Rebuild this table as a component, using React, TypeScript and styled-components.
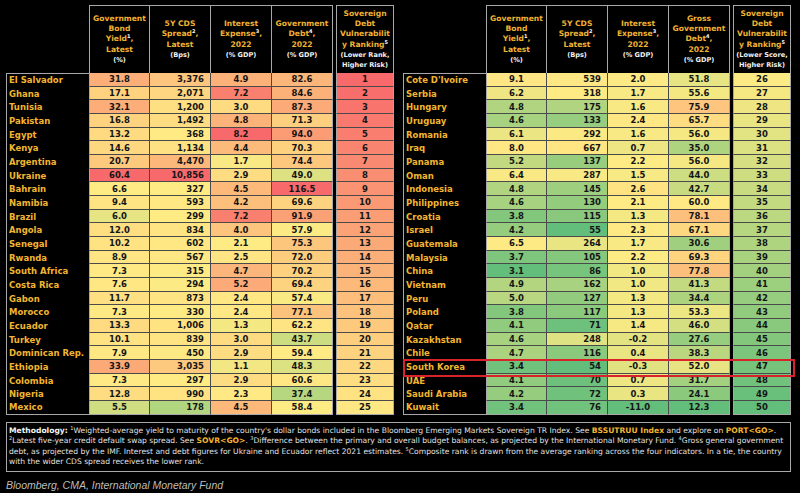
import React from 'react'
import styled, { createGlobalStyle } from 'styled-components'

type Row = [string, number, number, number, number, number]

const leftRows: Row[] = [
  ['El Salvador', 31.8, 3376, 4.9, 82.6, 1],
  ['Ghana', 17.1, 2071, 7.2, 84.6, 2],
  ['Tunisia', 32.1, 1200, 3.0, 87.3, 3],
  ['Pakistan', 16.8, 1492, 4.8, 71.3, 4],
  ['Egypt', 13.2, 368, 8.2, 94.0, 5],
  ['Kenya', 14.6, 1134, 4.4, 70.3, 6],
  ['Argentina', 20.7, 4470, 1.7, 74.4, 7],
  ['Ukraine', 60.4, 10856, 2.9, 49.0, 8],
  ['Bahrain', 6.6, 327, 4.5, 116.5, 9],
  ['Namibia', 9.4, 593, 4.2, 69.6, 10],
  ['Brazil', 6.0, 299, 7.2, 91.9, 11],
  ['Angola', 12.0, 834, 4.0, 57.9, 12],
  ['Senegal', 10.2, 602, 2.1, 75.3, 13],
  ['Rwanda', 8.9, 567, 2.5, 72.0, 14],
  ['South Africa', 7.3, 315, 4.7, 70.2, 15],
  ['Costa Rica', 7.6, 294, 5.2, 69.4, 16],
  ['Gabon', 11.7, 873, 2.4, 57.4, 17],
  ['Morocco', 7.3, 330, 2.4, 77.1, 18],
  ['Ecuador', 13.3, 1006, 1.3, 62.2, 19],
  ['Turkey', 10.1, 839, 3.0, 43.7, 20],
  ['Dominican Rep.', 7.9, 450, 2.9, 59.4, 21],
  ['Ethiopia', 33.9, 3035, 1.1, 48.3, 22],
  ['Colombia', 7.3, 297, 2.9, 60.6, 23],
  ['Nigeria', 12.8, 990, 2.3, 37.4, 24],
  ['Mexico', 5.5, 178, 4.5, 58.4, 25],
]

const rightRows: Row[] = [
  ["Cote D'Ivoire", 9.1, 539, 2.0, 51.8, 26],
  ['Serbia', 6.2, 318, 1.7, 55.6, 27],
  ['Hungary', 4.8, 175, 1.6, 75.9, 28],
  ['Uruguay', 4.6, 133, 2.4, 65.7, 29],
  ['Romania', 6.1, 292, 1.6, 56.0, 30],
  ['Iraq', 8.0, 667, 0.7, 35.0, 31],
  ['Panama', 5.2, 137, 2.2, 56.0, 32],
  ['Oman', 6.4, 287, 1.5, 44.0, 33],
  ['Indonesia', 4.8, 145, 2.6, 42.7, 34],
  ['Philippines', 4.6, 130, 2.1, 60.0, 35],
  ['Croatia', 3.8, 115, 1.3, 78.1, 36],
  ['Israel', 4.2, 55, 2.3, 67.1, 37],
  ['Guatemala', 6.5, 264, 1.7, 30.6, 38],
  ['Malaysia', 3.7, 105, 2.2, 69.3, 39],
  ['China', 3.1, 86, 1.0, 77.8, 40],
  ['Vietnam', 4.9, 162, 1.0, 41.3, 41],
  ['Peru', 5.0, 127, 1.3, 34.4, 42],
  ['Poland', 3.8, 117, 1.3, 53.3, 43],
  ['Qatar', 4.1, 71, 1.4, 46.0, 44],
  ['Kazakhstan', 4.6, 248, -0.2, 27.6, 45],
  ['Chile', 4.7, 116, 0.4, 38.3, 46],
  ['South Korea', 3.4, 54, -0.3, 52.0, 47],
  ['UAE', 4.1, 70, 0.7, 31.7, 48],
  ['Saudi Arabia', 4.2, 72, 0.3, 24.1, 49],
  ['Kuwait', 3.4, 76, -11.0, 12.3, 50],
]

// Excel-style three colour scale: min / 50th percentile / max
const RED = [248, 105, 107]
const YELLOW = [255, 235, 132]
const GREEN = [99, 190, 123]

const mix = (a: number[], b: number[], t: number) =>
  `rgb(${a.map((v, i) => Math.round(v + (b[i] - v) * t)).join(',')})`

const allRows = [...leftRows, ...rightRows]
const stats = [1, 2, 3, 4, 5].map((c) => {
  const vals = allRows.map((r) => r[c] as number).sort((a, b) => a - b)
  const n = vals.length
  return { min: vals[0], mid: (vals[n / 2 - 1] + vals[n / 2]) / 2, max: vals[n - 1] }
})

const heat = (col: number, v: number) => {
  const { min, mid, max } = stats[col - 1]
  const low = col === 5 ? RED : GREEN
  const high = col === 5 ? GREEN : RED
  if (v <= mid) return mix(low, YELLOW, (v - min) / (mid - min))
  return mix(YELLOW, high, (v - mid) / (max - mid))
}

const fmt = (col: number, v: number) => {
  if (col === 2) return v.toLocaleString('en-US')
  if (col === 5) return String(v)
  return v.toFixed(1)
}

const GlobalStyle = createGlobalStyle`
  body {
    margin: 0;
    background: #000;
  }
`

const Page = styled.div`
  width: 800px;
  height: 493px;
  background: #000;
  padding: 5px 6px 0;
  box-sizing: border-box;
  font-family: "DejaVu Sans", Verdana, sans-serif;
`

const Tables = styled.div`
  display: flex;
  gap: 9px;
`

const Table = styled.div`
  position: relative;
  display: grid;
  grid-template-columns: 83px repeat(4, 61px) 3px 58px;
  grid-template-rows: 68px repeat(25, 13.68px);
`

const Blank = styled.div`
  background: #000;
`

const HeadCell = styled.div<{ $first?: boolean; $rank?: boolean }>`
  display: flex;
  flex-direction: column;
  align-items: center;
  justify-content: center;
  text-align: center;
  background: #000;
  color: #f0b232;
  font-weight: bold;
  font-size: 7.6px;
  line-height: 10.3px;
  border-top: 1px solid #a8a8a8;
  border-right: 1px solid #a8a8a8;
  border-left: ${(p) => (p.$first || p.$rank ? '1px solid #a8a8a8' : 'none')};
  box-sizing: border-box;
  white-space: nowrap;

  sup {
    color: #fff;
    font-size: 5px;
    vertical-align: 3px;
    line-height: 0;
  }
`

const Unit = styled.span`
  color: #f2f2f2;
  font-size: 6.6px;
`

const Country = styled.div<{ $top?: boolean; $bottom?: boolean }>`
  display: flex;
  align-items: center;
  padding-left: 2px;
  background: #000;
  color: #f2b530;
  font-weight: bold;
  font-size: 8.5px;
  white-space: nowrap;
  border-left: 1px solid #a8a8a8;
  border-top: ${(p) => (p.$top ? '1px solid #a8a8a8' : 'none')};
  border-bottom: ${(p) => (p.$bottom ? '1px solid #a8a8a8' : 'none')};
  box-sizing: border-box;
`

const Cell = styled.div<{ $bg: string; $right?: boolean; $edge?: boolean; $first?: boolean; $last?: boolean }>`
  display: flex;
  align-items: center;
  justify-content: ${(p) => (p.$right ? 'flex-end' : 'center')};
  padding-right: ${(p) => (p.$right ? '6px' : '0')};
  background: ${(p) => p.$bg};
  color: #151515;
  font-weight: bold;
  font-size: 8.5px;
  border-right: 1px solid ${(p) => (p.$edge ? '#a8a8a8' : '#4a4a4a')};
  border-bottom: 1px solid ${(p) => (p.$last ? '#a8a8a8' : '#4a4a4a')};
  border-left: ${(p) => (p.$first ? '1px solid #a8a8a8' : 'none')};
  box-sizing: border-box;
`

const Spacer = styled.div`
  background: #000;
`

// red box drawn over one row; the grid area of that row is its containing block
const Highlight = styled.div`
  position: absolute;
  grid-column: 1 / -1;
  top: -1px;
  bottom: -3px;
  left: 0;
  right: -4px;
  border: 2px solid #d9232b;
  pointer-events: none;
`

const Notes = styled.div`
  margin-top: 7px;
  margin-right: 3px;
  border: 1px solid #a8a8a8;
  padding: 3px 2px 4px;
  color: #e0e0e0;
  font-size: 7.6px;
  line-height: 10.4px;
  white-space: nowrap;

  sup {
    font-size: 5px;
    vertical-align: 3px;
    line-height: 0;
  }
`

const Line = styled.div``

const Bold = styled.b`
  color: #f4f4f4;
`

const Code = styled.b`
  color: #f2b530;
`

const Source = styled.div`
  margin-top: 7px;
  font-family: "Liberation Sans", Arial, sans-serif;
  font-style: italic;
  font-size: 10.5px;
  color: #bdbdbd;
`

type Head = { lines: React.ReactNode[]; units: string[] }

const heads = (gross: boolean, rankNote: string): Head[] => [
  { lines: ['Government', 'Bond', <>Yield<sup>1</sup>,</>, 'Latest'], units: ['(%)'] },
  { lines: ['5Y CDS', <>Spread<sup>2</sup>,</>, 'Latest'], units: ['(Bps)'] },
  { lines: ['Interest', <>Expense<sup>3</sup>,</>, '2022'], units: ['(% GDP)'] },
  {
    lines: gross
      ? ['Gross', 'Government', <>Debt<sup>4</sup>,</>, '2022']
      : ['Government', <>Debt<sup>4</sup>,</>, '2022'],
    units: ['(% GDP)'],
  },
  {
    lines: ['Sovereign', 'Debt', 'Vulnerabilit', <>y Ranking<sup>5</sup></>],
    units: [rankNote, 'Higher Risk)'],
  },
]

const DebtTable = ({ rows, gross, rankNote, highlight }: { rows: Row[]; gross: boolean; rankNote: string; highlight?: number }) => {
  const h = heads(gross, rankNote)
  return (
    <Table>
      <Blank />
      {h.map((head, i) => (
        <React.Fragment key={i}>
          {i === 4 && <Spacer />}
          <HeadCell $first={i === 0} $rank={i === 4}>
            {head.lines.map((l, j) => (
              <span key={j}>{l}</span>
            ))}
            {head.units.map((u) => (
              <Unit key={u}>{u}</Unit>
            ))}
          </HeadCell>
        </React.Fragment>
      ))}
      {rows.map((r, ri) => (
        <React.Fragment key={r[0]}>
          <Country $top={ri === 0} $bottom={ri === rows.length - 1}>
            {r[0]}
          </Country>
          {[1, 2, 3, 4, 5].map((c) => (
            <React.Fragment key={c}>
              {c === 5 && <Spacer />}
              <Cell
                $bg={heat(c, r[c] as number)}
                $right={c === 2}
                $first={c === 1 || c === 5}
                $edge={c === 4 || c === 5}
                $last={ri === rows.length - 1}
              >
                {fmt(c, r[c] as number)}
              </Cell>
            </React.Fragment>
          ))}
        </React.Fragment>
      ))}
      {highlight !== undefined && <Highlight style={{ gridRow: `${highlight + 2} / ${highlight + 3}` }} />}
    </Table>
  )
}

export default function App() {
  return (
    <>
      <GlobalStyle />
      <Page>
        <Tables>
          <DebtTable rows={leftRows} gross={false} rankNote="(Lower Rank," />
          <DebtTable rows={rightRows} gross rankNote="(Lower Score," highlight={21} />
        </Tables>
        <Notes>
          <Line>
            <Bold>Methodology:</Bold> <sup>1</sup>Weighted-average yield to maturity of the country's dollar bonds included in the
            Bloomberg Emerging Markets Sovereign TR Index. See <Code>BSSUTRUU Index</Code> and explore on <Code>PORT&lt;GO&gt;</Code>.
          </Line>
          <Line>
            <sup>2</sup>Latest five-year credit default swap spread. See <Code>SOVR&lt;GO&gt;</Code>. <sup>3</sup>Difference between the
            primary and overall budget balances, as projected by the International Monetary Fund. <sup>4</sup>Gross general government
          </Line>
          <Line>
            debt, as projected by the IMF. Interest and debt figures for Ukraine and Ecuador reflect 2021 estimates. <sup>5</sup>Composite
            rank is drawn from the average ranking across the four indicators. In a tie, the country
          </Line>
          <Line>with the wider CDS spread receives the lower rank.</Line>
        </Notes>
        <Source>Bloomberg, CMA, International Monetary Fund</Source>
      </Page>
    </>
  )
}
